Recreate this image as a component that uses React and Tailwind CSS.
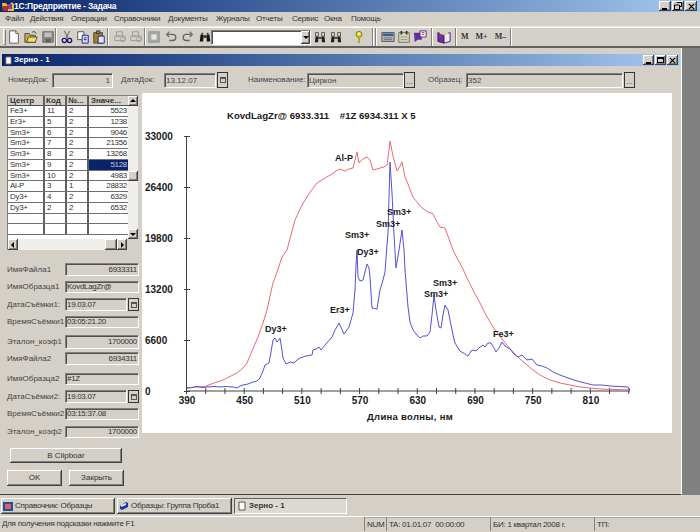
const raised = 'shadow-[inset_-1px_-1px_0_#404040,inset_1px_1px_0_#ffffff,inset_-2px_-2px_0_#808080]'
const sunken = 'border border-t-[#808080] border-l-[#808080] border-r-white border-b-white shadow-[inset_1px_1px_0_#505050]'

const menu = [
  ['Файл', 'w-[25px]'], ['Действия', 'w-[41px]'], ['Операции', 'w-[43px]'], ['Справочники', 'w-[54px]'], ['Документы', 'w-[48px]'],
  ['Журналы', 'w-[40px]'], ['Отчеты', 'w-[36px]'], ['Сервис', 'w-[32px]'], ['Окна', 'w-[27px]'], ['Помощь', 'w-[40px]'],
]

const rows = [
  ['Fe3+', '11', '2', '5523'], ['Er3+', '5', '2', '1238'], ['Sm3+', '6', '2', '9046'], ['Sm3+', '7', '2', '21356'],
  ['Sm3+', '8', '2', '13268'], ['Sm3+', '9', '2', '5128'], ['Sm3+', '10', '2', '4983'], ['Al-P', '3', '1', '28832'],
  ['Dy3+', '4', '2', '6329'], ['Dy3+', '2', '2', '6532'], ['', '', '', ''], ['', '', '', ''],
]

const fields = [
  { label: 'ИмяФайла1', value: '6933311', right: true, cls: 'mt-[13px] h-[13px]' },
  { label: 'ИмяОбразца1', value: 'KovdLagZr@', cls: 'mt-[5px] h-[12px]' },
  { label: 'ДатаСъёмки1:', value: '19.03.07', date: true, cls: 'mt-[5px] h-[13px]' },
  { label: 'ВремяСъёмки1', value: '03:05:21.20', cls: 'mt-[5px] h-[12px]' },
  { label: 'Эталон_коэф1', value: '1700000', right: true, cls: 'mt-[7px] h-[14px]' },
  { label: 'ИмяФайла2', value: '6934311', right: true, cls: 'mt-[3px] h-[13px]' },
  { label: 'ИмяОбразца2', value: '#1Z', cls: 'mt-[8px] h-[12px]' },
  { label: 'ДатаСъёмки2:', value: '19.03.07', date: true, cls: 'mt-[5px] h-[13px]' },
  { label: 'ВремяСъёмки2', value: '03:15:37.08', cls: 'mt-[5px] h-[12px]' },
  { label: 'Эталон_коэф2', value: '1700000', right: true, cls: 'mt-[6px] h-[12px]' },
]

const red = '187,388 196,387 205,386.5 214,383 223,380 231,376 237,373 243,368 247,363 252,351 258,337 263,323 267,310 270,296 273,283 276,275 279,266 282,257 287,250 291,235 295,220 300,209 305,200 311,191 317,183 325,178 332,174 336,171 340,169 345,171 349,169 353,168 355,160 357,152 359,163 363,159 367,157 370,160 373,170 377,169 380,168 384,167 387,165 389,150 390,141 393,156 397,171 400,166 402,162 405,177 408,184 411,192 413,197 417,202 422,208 425,210 428,212 431,213 433,214 436,220 440,227 445,228 449,239 453,250 457,258 462,267 468,280 474,292 480,303 486,315 493,327 499,335 506,344 513,352 520,359 527,365 533,370 540,375 550,380 560,383 570,385 580,387 590,388 600,389 615,389.5 630,390'
const blue = '187,388 192,387.5 197,386.5 202,387.5 207,387 214,386.5 220,387 226,386.5 233,387 237,388 240,386 243,385 248,384 253,382 257,381 260,378 263,371 265,365 269,363 271,352 273,340 275,338 277,342 280,338 282,350 283,358 286,364 290,362 294,363 297,360 300,358 306,356 312,355 313,350 316,349 319,347 321,350 326,344 332,337 335,330 339,323 344,334 349,327 353,313 355,290 356,265 357,250 358,277 360,281 363,280 365,272 367,264 369,268 370,277 372,308 377,309 380,290 383,280 385,272 387,245 388,233 390,162 392,193 394,235 396,268 399,250 402,230 404,250 405,270 408,307 410,322 413,330 417,335 420,338 423,336 427,336 430,332 432,315 434,295 436,310 439,327 441,328 443,315 445,305 448,310 450,320 453,335 455,343 460,351 465,354 468,356 471,351 473,350 476,351 480,347 483,345 485,347 488,343 491,343 494,348 496,352 499,348 502,342 505,346 510,349 514,354 518,357 522,355 527,360 532,359 537,365 542,366 547,368 553,372 560,375 568,378 577,381 585,383 593,385 602,385 610,386 620,386.5 628,387 630,390'

const yLabels = [['33000', 136], ['26400', 187], ['19800', 238], ['13200', 289], ['6600', 340], ['0', 391]]
const peaks = [
  ['Al-P', 335, 157], ['Sm3+', 345, 234], ['Dy3+', 357, 251], ['Sm3+', 376, 223], ['Sm3+', 387, 211],
  ['Er3+', 330, 309], ['Dy3+', 265, 328], ['Sm3+', 433, 282], ['Sm3+', 424, 293], ['Fe3+', 493, 333],
]

function Ico({ children }) {
  return <svg viewBox="0 0 16 16" className="w-[14px] h-[14px] mx-px shrink-0">{children}</svg>
}

const NewIcon = () => <Ico><path d="M3 1h7l3 3v11H3z" fill="#fff" stroke="#555" /><path d="M10 1v3h3" fill="#ffff99" stroke="#555" /></Ico>
const OpenIcon = () => <Ico><path d="M1 4h5l1 2h6v8H1z" fill="#c8b040" stroke="#444" /><path d="M3 14l2-6h10l-2 6z" fill="#f0e060" stroke="#444" /><path d="M9 3c2-2 4-1 5 1" fill="none" stroke="#222" /></Ico>
const SaveIcon = () => <Ico><path d="M2 2h12v12H2z" fill="#8c8c8c" stroke="#666" /><path d="M4 3h8v5H4z" fill="#c4c0b8" /><path d="M5 10h6v4H5z" fill="#5f5f5f" /></Ico>
const CutIcon = () => <Ico><path d="M5 1l4 8M11 1L7 9" stroke="#555" fill="none" /><circle cx="5" cy="12" r="2.400" fill="none" stroke="#101070" strokeWidth="1.4" /><circle cx="11" cy="12" r="2.400" fill="none" stroke="#101070" strokeWidth="1.4" /></Ico>
const CopyIcon = () => <Ico><path d="M2 2h7v9H2z" fill="#fff" stroke="#444" /><path d="M7 6h7v9H7z" fill="#d8d8f0" stroke="#102080" /><path d="M9 9h3M9 11h3" stroke="#102080" /></Ico>
const PasteIcon = () => <Ico><path d="M2 3h10v12H2z" fill="#a08020" stroke="#444" /><path d="M5 1h4v3H5z" fill="#888" stroke="#333" /><path d="M7 7h7v8H7z" fill="#dfe4f4" stroke="#102080" /></Ico>
const PrintIcon = () => <Ico><path d="M4 2h7v5H4zM2 7h12v5H2z" fill="#d4d0c8" stroke="#9a9a9a" /><circle cx="11" cy="11" r="2.500" fill="none" stroke="#9a9a9a" /></Ico>
const GridIcon = () => <Ico><path d="M2 2h12v12H2z" fill="#a8a8a8" stroke="#909090" /><path d="M5 5h6v6H5z" fill="#e6e6e6" /></Ico>
const UndoIcon = () => <Ico><path d="M4 5h6a3 3 0 0 1 0 7H6" fill="none" stroke="#666" strokeWidth="1.5" /><path d="M6 2L3 5l3 3" fill="none" stroke="#666" strokeWidth="1.3" /></Ico>
const RedoIcon = () => <Ico><path d="M12 5H6a3 3 0 0 0 0 7h4" fill="none" stroke="#666" strokeWidth="1.5" /><path d="M10 2l3 3-3 3" fill="none" stroke="#666" strokeWidth="1.3" /></Ico>
const BinocIcon = () => <Ico><path d="M2 13l1-8h3v8zM10 13V5h3l1 8z" fill="#111" /><path d="M6 6h4v3H6z" fill="#333" /><path d="M4 3h2v2H4zM10 3h2v2h-2z" fill="#444" /></Ico>
const BinocAIcon = () => <Ico><path d="M2 14l1-7h3v7zM10 14V7h3l1 7z" fill="#222" /><path d="M6 8h4v2H6z" fill="#333" /><path d="M3 3h3v4H3zM10 3h3v4h-3z" fill="#fff" stroke="#333" /></Ico>
const KeyIcon = () => <Ico><circle cx="8" cy="5" r="3.400" fill="#e8d820" stroke="#667020" /><path d="M7 8h2v7H7z" fill="#a8a020" /><circle cx="8" cy="4" r="1" fill="#fff" /></Ico>
const CalcIcon = () => <Ico><path d="M1 3h14v10H1z" fill="#c0c0c0" stroke="#444" /><path d="M2 4h12v3H2z" fill="#3060a0" /><path d="M3 9h10M3 11h10" stroke="#666" /></Ico>
const SheetIcon = () => <Ico><path d="M2 3h12v11H2z" fill="#dcd8b8" stroke="#666" /><path d="M4 1h2v4H4zM10 1h2v4h-2z" fill="#333" /><path d="M4 8h8M4 11h8" stroke="#888" /></Ico>
const ChartIcon = () => <Ico><path d="M1 3h9v8H5l-3 3z" fill="#6030a0" /><path d="M8 1h7v7H8z" fill="#fff" stroke="#402080" /><path d="M10 3h3M10 5h3" stroke="#c02020" /></Ico>
const BookIcon = () => <Ico><path d="M1 3l7 2v10l-7-2z" fill="#7030a0" stroke="#401070" /><path d="M15 3L8 5v10l7-2z" fill="#f0e8f8" stroke="#401070" /><path d="M3 1l5 3 5-3v3l-5 2-5-2z" fill="#e0d8a0" /></Ico>

const Sep = () => <div className="w-[2px] h-[18px] shrink-0 border-l border-l-[#808080] border-r border-r-white" />

function TitleButton({ type, small }) {
  return (
    <div className={`${small ? 'w-[11px]' : 'w-[12px]'} h-[10px] bg-[#d4d0c8] flex items-center justify-center ${raised}`}>
      {type === 'min' && <div className="w-[5px] h-[2px] bg-black mt-[5px] -ml-[1px]" />}
      {type === 'max' && <div className="w-[7px] h-[6px] border border-black border-t-2" />}
      {type === 'restore' && (
        <svg viewBox="0 0 8 8" className="w-2 h-2"><path d="M2.500 .5h5v4h-2M.5 3h5v4.500h-5z" fill="none" stroke="#000" /></svg>
      )}
      {type === 'close' && (
        <svg viewBox="0 0 8 8" className="w-[7px] h-[7px]"><path d="M1 1l6 6M7 1L1 7" stroke="#000" strokeWidth="1.5" /></svg>
      )}
    </div>
  )
}

function ArrowBtn({ dir, className = '' }) {
  const d = { up: 'M1 5l3-3 3 3z', down: 'M1 3l3 3 3-3z', left: 'M5 1L2 4l3 3z', right: 'M3 1l3 3-3 3z' }[dir]
  return (
    <div className={`bg-[#d4d0c8] flex items-center justify-center ${raised} ${className}`}>
      <svg viewBox="0 0 8 8" className="w-2 h-2"><path d={d} fill="#000" /></svg>
    </div>
  )
}

function DateBtn() {
  return (
    <div className="w-[11px] h-full shrink-0 bg-[#d4d0c8] border border-[#333] flex items-center justify-center">
      <div className="w-[6px] h-[6px] border border-[#555] border-t-2" />
    </div>
  )
}

function DotsBtn() {
  return (
    <div className="w-[11px] h-[16px] shrink-0 bg-[#d4d0c8] border border-[#333] flex items-end justify-center pb-[2px] text-[8px] leading-[6px]">...</div>
  )
}

function Chart() {
  return (
    <svg viewBox="142 93 530 340" className="w-[530px] h-[340px] block bg-white shrink-0 font-bold" fontSize="10" fill="#1a1a1a">
      <path d="M186.500 136V391H630" fill="none" stroke="#404040" />
      {yLabels.map(([t, y]) => (
        <g key={t}>
          <path d={`M184 ${y + 0.5}h6`} stroke="#404040" />
          <text x="145" y={y + 3.5}>{t}</text>
        </g>
      ))}
      {Array.from({ length: 24 }).map((_, i) => (
        <path key={i} d={`M${186.5 + i * 19.23} 388v6`} stroke="#404040" />
      ))}
      {[390, 450, 510, 570, 630, 690, 750, 810].map((v, i) => (
        <text key={v} x={187 + i * 57.7} y="404" textAnchor="middle">{v}</text>
      ))}
      <polyline points={red} fill="none" stroke="#ea6a70" />
      <polyline points={blue} fill="none" stroke="#5252d4" />
      <text x="227" y="118.500" fontSize="9.6" xmlSpace="preserve">KovdLagZr@ 6933.311    #1Z 6934.311 X 5</text>
      <text x="367" y="420" fontSize="9.5" letterSpacing=".3">Длина волны, нм</text>
      {peaks.map(([t, x, y]) => <text key={`${t}${x}`} x={x} y={y + 3.5} fontSize="9">{t}</text>)}
    </svg>
  )
}

function GridTable() {
  return (
    <div className="w-[131px] h-[155px] mt-[2px] bg-[#d4d0c8] flex flex-col border-t border-l border-[#808080] shrink-0">
      <div className="flex flex-1 min-h-0">
        <div className="w-[120px] flex flex-col bg-white overflow-hidden">
          <div className="grid grid-cols-[37px_22px_22px_39px] h-[10px] shrink-0 font-bold leading-[10px] bg-[#d4d0c8] border-b border-b-[#505050]">
            <div className="pl-[2px] border-r-2 border-r-[#606060]">Центр</div>
            <div className="pl-[1px] border-r-2 border-r-[#606060]">Код</div>
            <div className="pl-[1px] border-r-2 border-r-[#606060]">№...</div>
            <div className="pl-[2px] whitespace-nowrap overflow-hidden">Значе...</div>
          </div>
          {rows.map((r, i) => (
            <div key={i} className="grid grid-cols-[37px_22px_22px_39px] h-[10.750px] shrink-0 leading-[10px] tracking-[-0.3px] text-[#333] border-b border-b-[#707070]">
              <div className="pl-[2px] border-r-2 border-r-[#606060]">{r[0]}</div>
              <div className="pl-[2px] border-r-2 border-r-[#606060]">{r[1]}</div>
              <div className="pl-[2px] border-r-2 border-r-[#606060]">{r[2]}</div>
              <div className={`text-right pr-[1px] ${i === 5 ? 'bg-[#0a246a] text-[#c0c8e0]' : ''}`}>{r[3]}</div>
            </div>
          ))}
        </div>
        <div className="w-[10px] flex flex-col bg-[#eeeeea]">
          <ArrowBtn dir="up" className="h-[10px]" />
          <div className={`h-[10px] mt-[65px] bg-[#d4d0c8] ${raised}`} />
          <ArrowBtn dir="down" className="h-[10px] mt-auto" />
        </div>
      </div>
      <div className="h-[11px] flex shrink-0 bg-[#eeeeea]">
        <ArrowBtn dir="left" className="w-[10px]" />
        <div className={`w-[12px] ml-[87px] bg-[#d4d0c8] ${raised}`} />
        <ArrowBtn dir="right" className="w-[10px]" />
        <div className="flex-1 bg-[#d4d0c8]" />
      </div>
    </div>
  )
}

function TaskTab({ icon, label, active, className }) {
  return (
    <div className={`h-[16px] flex items-center gap-[2px] pl-[2px] tracking-[-0.25px] ${className} ${active ? 'border border-t-[#606060] border-l-[#606060] border-r-white border-b-white font-bold bg-[#dcd9d2] tracking-normal' : raised}`}>
      {icon}
      <span className="whitespace-nowrap">{label}</span>
    </div>
  )
}

export default function App() {
  return (
    <div className="w-[700px] h-[532px] overflow-hidden flex flex-col bg-[#d4d0c8] text-[#333] text-[8px] font-['Liberation_Sans','Noto_Sans',sans-serif]">
      {/* main title */}
      <div className="h-[12px] shrink-0 flex items-center pl-[2px] pr-[3px] bg-gradient-to-r from-[#0a246a] to-[#a6caf0]">
        <svg viewBox="0 0 12 11" className="w-[12px] h-[11px] shrink-0">
          <path d="M0 2h4l2 3 4-4 2 2v7H1z" fill="#e8c020" />
          <path d="M1 5h5v5H1z" fill="#c02828" />
          <path d="M6 3h4v5H6z" fill="#8040b0" />
        </svg>
        <span className="text-white font-bold text-[8.500px] tracking-[-0.2px] leading-none">1С:Предприятие - Задача</span>
        <div className="ml-auto flex gap-[1px]">
          <TitleButton type="min" />
          <TitleButton type="restore" />
          <TitleButton type="close" />
        </div>
      </div>

      {/* menu */}
      <div className="h-[15px] shrink-0 flex items-center pl-[5px] border-b border-b-[#ece9e2] tracking-[-0.2px]">
        {menu.map(([m, w]) => <div key={m} className={`${w} shrink-0 whitespace-nowrap`}>{m}</div>)}
      </div>

      {/* toolbar */}
      <div className="h-[21px] shrink-0 flex items-center pl-[3px] border-t border-t-white border-b-2 border-b-[#606060]">
        <div className="w-[3px] h-[16px] shrink-0 border border-t-white border-l-white border-r-[#808080] border-b-[#808080]" />
        <div className="flex items-center w-[49px] gap-[1px]"><NewIcon /><OpenIcon /><SaveIcon /></div>
        <Sep />
        <div className="flex items-center w-[50px] pl-[2px]"><CutIcon /><CopyIcon /><PasteIcon /></div>
        <Sep />
        <div className="flex items-center w-[35px] pl-[3px]"><PrintIcon /><PrintIcon /></div>
        <Sep />
        <div className="flex items-center w-[65px] gap-[1px]"><GridIcon /><UndoIcon /><RedoIcon /><BinocIcon /></div>
        <div className={`w-[100px] h-[15px] bg-white flex justify-end ${sunken}`}>
          <ArrowBtn dir="down" className="w-[9px]" />
        </div>
        <div className="flex items-center ml-[1px] w-[60px]"><BinocAIcon /><BinocAIcon /><div className="ml-[7px]"><KeyIcon /></div></div>
        <Sep />
        <div className="ml-[1px]"><Sep /></div>
        <div className="flex items-center w-[52px] pl-[1px] ml-[2px]"><CalcIcon /><SheetIcon /><ChartIcon /></div>
        <Sep />
        <div className="w-[22px] pl-[3px]"><BookIcon /></div>
        <Sep />
        <div className="w-[53px] pl-[4px] flex items-center gap-[7px] font-['Liberation_Serif',serif] font-bold">
          <span>M</span><span>M+</span><span>M–</span>
        </div>
        <Sep />
      </div>

      {/* mdi area */}
      <div className="flex-1 min-h-0 flex bg-[#808080]">
        <div className="w-[682px] flex flex-col bg-[#d4d0c8] border-r border-r-white border-b border-b-[#404040] pt-[6px] pl-[2px] pr-[1px]">
          <div className="h-[12px] shrink-0 flex items-center pl-[2px] pr-[2px] bg-gradient-to-r from-[#0a246a] to-[#a6caf0]">
            <svg viewBox="0 0 10 10" className="w-[9px] h-[9px]"><path d="M2 1h6v8H2z" fill="#fff" stroke="#555" /></svg>
            <span className="ml-[1px] text-white font-bold leading-none">Зерно - 1</span>
            <div className="ml-auto flex gap-[1px]">
              <TitleButton small type="min" />
              <TitleButton small type="max" />
              <TitleButton small type="close" />
            </div>
          </div>

          {/* doc header */}
          <div className="h-[24px] shrink-0 flex items-center pl-[6px] pt-[4px] text-[#444]">
            <span className="w-[44px] shrink-0">НомерДок:</span>
            <div className={`w-[61px] h-[15px] text-right pr-[2px] leading-[13px] ${sunken}`}>1</div>
            <span className="ml-[8px] w-[43px] shrink-0">ДатаДок:</span>
            <div className={`w-[52px] h-[15px] pl-[1px] leading-[13px] ${sunken}`}>13.12.07</div>
            <div className="h-[16px] ml-[1px]"><DateBtn /></div>
            <span className="ml-[20px] w-[59px] shrink-0 whitespace-nowrap">Наименование:</span>
            <div className={`w-[97px] h-[15px] pl-[1px] leading-[13px] ${sunken}`}>Циркон</div>
            <DotsBtn />
            <span className="ml-[13px] w-[38px] shrink-0">Образец:</span>
            <div className={`w-[157px] h-[15px] pl-[1px] leading-[13px] ${sunken}`}>352</div>
            <div className="ml-[1px]"><DotsBtn /></div>
          </div>

          <div className="flex-1 min-h-0 flex pt-[3px]">
            <div className="w-[140px] shrink-0 pl-[5px] pr-[3px] flex flex-col">
              <GridTable />
              {fields.map(f => (
                <div key={f.label} className={`flex items-center shrink-0 ${f.cls}`}>
                  <span className="w-[58px] shrink-0 whitespace-nowrap text-[#444]">{f.label}</span>
                  <div className={`flex-1 min-w-0 h-full flex items-center px-[1px] tracking-[-0.3px] ${sunken} ${f.right ? 'justify-end' : ''}`}>{f.value}</div>
                  {f.date && <div className="h-full ml-[1px]"><DateBtn /></div>}
                </div>
              ))}
              <div className={`mt-[10px] ml-[3px] w-[112px] h-[15px] shrink-0 flex items-center justify-center ${raised}`}>В Clipboar</div>
              <div className="mt-[7px] flex gap-[7px]">
                <div className={`w-[55px] h-[16px] flex items-center justify-center ${raised}`}>OK</div>
                <div className={`w-[55px] h-[16px] flex items-center justify-center ${raised}`}>Закрыть</div>
              </div>
            </div>
            <Chart />
          </div>
        </div>
      </div>

      {/* window tabs */}
      <div className="h-[21px] shrink-0 flex items-center gap-[2px] pl-[1px]">
        <TaskTab className="w-[114px]" label="Справочник: Образцы" icon={
          <svg viewBox="0 0 10 10" className="w-[10px] h-[10px]"><path d="M0 1h10v9H0z" fill="#2050a0" /><path d="M2 3h6v5H2z" fill="#e06060" /></svg>
        } />
        <TaskTab className="w-[115px]" label="Образцы: Группа Проба1" icon={
          <svg viewBox="0 0 10 10" className="w-[10px] h-[10px]"><path d="M1 5l6-4 2 1v4l-6 3-2-1z" fill="#1838a0" /><path d="M2 4l5-2v2l-5 2z" fill="#e0e8ff" /></svg>
        } />
        <TaskTab active className="w-[113px]" label="Зерно - 1" icon={
          <svg viewBox="0 0 10 10" className="w-[10px] h-[10px]"><path d="M2 1h6v8H2z" fill="#fff" stroke="#555" /></svg>
        } />
      </div>

      {/* status bar */}
      <div className="h-[16px] shrink-0 flex items-stretch border-t border-t-white tracking-[-0.25px] pb-[1px]">
        <div className="w-[365px] pl-[2px] flex items-center whitespace-nowrap border-r border-r-[#808080]">Для получения подсказки нажмите F1</div>
        <div className="w-[22px] pl-[2px] flex items-center border-t border-t-[#a8a8a8] border-r border-r-[#808080]">NUM</div>
        <div className="w-[104px] pl-[2px] flex items-center border-t border-t-[#a8a8a8] whitespace-pre border-r border-r-[#808080]">TA: 01.01.07  00:00:00</div>
        <div className="w-[104px] pl-[2px] flex items-center border-t border-t-[#a8a8a8] whitespace-nowrap border-r border-r-[#808080]">БИ: 1 квартал 2008 г.</div>
        <div className="flex-1 pl-[2px] flex items-center border-t border-t-[#a8a8a8]">ТП:</div>
      </div>
    </div>
  )
}
